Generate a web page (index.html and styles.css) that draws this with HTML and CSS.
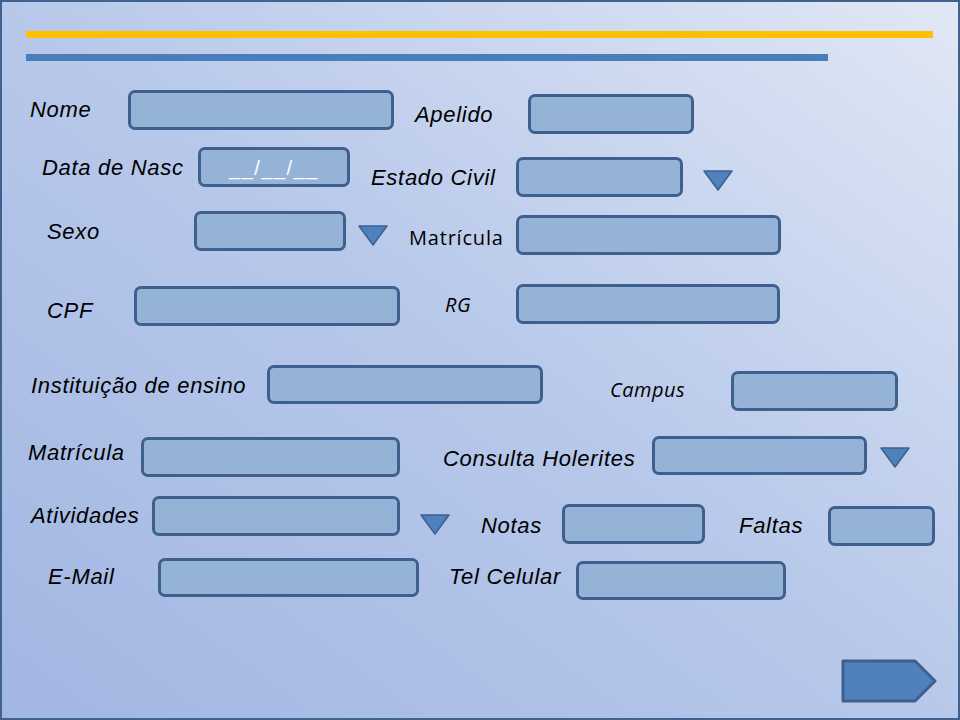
FILE: index.html
```html
<!DOCTYPE html>
<html lang="pt-BR">
<head>
    <meta charset="UTF-8">
    <meta name="viewport" content="width=device-width, initial-scale=1.0">
    <title>Cadastro de Aluno</title>
    <link rel="stylesheet" href="styles.css">
</head>
<body>

    <div class="slide">
        <!-- Title bars -->
        <div class="rule rule-yellow"></div>
        <div class="rule rule-blue"></div>

        <div class="row row-1">
            <span class="label l-nome">Nome</span>
            <div class="box b-nome"></div>
            <span class="label l-apelido">Apelido</span>
            <div class="box b-apelido"></div>
        </div>

        <div class="row row-2">
            <span class="label l-nasc">Data de Nasc</span>
            <div class="box b-nasc"><span class="date-mask">__/__/__</span></div>
            <span class="label l-civil">Estado Civil</span>
            <div class="box b-civil"></div>
            <svg class="tri t-civil" width="30" height="21" viewBox="0 0 30 21"><polygon points="1,1 29,1 15,20"/></svg>
        </div>

        <div class="row row-3">
            <span class="label l-sexo">Sexo</span>
            <div class="box b-sexo"></div>
            <svg class="tri t-sexo" width="30" height="21" viewBox="0 0 30 21"><polygon points="1,1 29,1 15,20"/></svg>
            <span class="label plain l-matricula">Matrícula</span>
            <div class="box b-matricula"></div>
        </div>

        <div class="row row-4">
            <span class="label l-cpf">CPF</span>
            <div class="box b-cpf"></div>
            <span class="label small l-rg">RG</span>
            <div class="box b-rg"></div>
        </div>

        <div class="row row-5">
            <span class="label l-inst">Instituição de ensino</span>
            <div class="box b-inst"></div>
            <span class="label small l-campus">Campus</span>
            <div class="box b-campus"></div>
        </div>

        <div class="row row-6">
            <span class="label l-mat2">Matrícula</span>
            <div class="box b-mat2"></div>
            <span class="label l-holerites">Consulta Holerites</span>
            <div class="box b-holerites"></div>
            <svg class="tri t-holerites" width="30" height="21" viewBox="0 0 30 21"><polygon points="1,1 29,1 15,20"/></svg>
        </div>

        <div class="row row-7">
            <span class="label l-ativ">Atividades</span>
            <div class="box b-ativ"></div>
            <svg class="tri t-ativ" width="30" height="21" viewBox="0 0 30 21"><polygon points="1,1 29,1 15,20"/></svg>
            <span class="label l-notas">Notas</span>
            <div class="box b-notas"></div>
            <span class="label l-faltas">Faltas</span>
            <div class="box b-faltas"></div>
        </div>

        <div class="row row-8">
            <span class="label l-email">E-Mail</span>
            <div class="box b-email"></div>
            <span class="label l-cel">Tel Celular</span>
            <div class="box b-cel"></div>
        </div>

        <!-- Next button -->
        <div class="footer">
            <svg class="next" width="96" height="44" viewBox="0 0 96 44"><polygon points="2,2 74,2 94,22 74,42 2,42"/></svg>
        </div>
    </div>

</body>
</html>
```

FILE: styles.css
```css
body {
    margin: 0;
    font-family: "Liberation Sans", Arial, sans-serif;
}

.slide {
    width: 960px;
    height: 720px;
    box-sizing: border-box;
    border: 2px solid #41628f;
    overflow: hidden;
    background: linear-gradient(to top right, #a2b6e2 0%, #b7c8ea 50%, #e1e8f5 100%);
}

.rule {
    margin-left: 24px;
    height: 7px;
}

.rule-yellow {
    margin-top: 29px;
    width: 907px;
    background-color: #ffc000;
}

.rule-blue {
    margin-top: 16px;
    width: 802px;
    background-color: #4a7ebb;
}

.row {
    display: flex;
    align-items: flex-start;
}

.row > * {
    flex: none;
}

.row-1 { margin-top: 29px; height: 44px; }
.row-2 { margin-top: 13px; height: 50px; }
.row-3 { margin-top: 14px; height: 44px; }
.row-4 { margin-top: 29px; height: 42px; }
.row-5 { margin-top: 39px; height: 46px; }
.row-6 { margin-top: 25px; height: 41px; }
.row-7 { margin-top: 19px; height: 50px; }
.row-8 { margin-top: 12px; height: 42px; }

.label {
    display: block;
    padding-top: 1px;
    font-size: 22px;
    line-height: 24px;
    font-style: italic;
    letter-spacing: 0.7px;
    color: #000;
    white-space: nowrap;
}

.label.plain {
    font-family: "Open Sans", sans-serif;
    font-size: 20px;
    font-style: normal;
    letter-spacing: 0.8px;
}

.label.small {
    font-family: "Open Sans", sans-serif;
    font-size: 20px;
    letter-spacing: 0.5px;
}

.box {
    height: 40px;
    box-sizing: border-box;
    border: 3px solid #3f5f8e;
    border-radius: 7px;
    background-color: #95b3d7;
    display: flex;
    justify-content: center;
    align-items: center;
}

.date-mask {
    color: #fff;
    font-size: 20px;
    letter-spacing: 1.5px;
    margin-top: 2px;
}

.tri polygon {
    fill: #4f81bd;
    stroke: #3f5f8e;
    stroke-width: 1.5;
    stroke-linejoin: round;
}

/* row 1 */
.l-nome { margin: 7px 0 0 28px; width: 98px; }
.b-nome { width: 266px; }
.l-apelido { margin: 12px 0 0 21px; width: 113px; }
.b-apelido { width: 166px; margin-top: 4px; }

/* row 2 */
.l-nasc { margin: 8px 0 0 40px; width: 156px; }
.b-nasc { width: 152px; }
.l-civil { margin: 18px 0 0 21px; width: 145px; }
.b-civil { width: 167px; margin-top: 10px; }
.t-civil { margin: 23px 0 0 20px; }

/* row 3 */
.l-sexo { margin: 8px 0 0 45px; width: 147px; }
.b-sexo { width: 152px; }
.t-sexo { margin: 14px 0 0 12px; }
.l-matricula { margin: 14px 0 0 21px; width: 107px; }
.b-matricula { width: 265px; margin-top: 4px; }

/* row 4 */
.l-cpf { margin: 14px 0 0 45px; width: 87px; }
.b-cpf { width: 266px; margin-top: 2px; }
.l-rg { margin: 8px 0 0 45px; width: 71px; }
.b-rg { width: 264px; }

/* row 5 */
.l-inst { margin: 8px 0 0 29px; width: 236px; }
.b-inst { width: 276px; height: 39px; }
.l-campus { margin: 12px 0 0 67px; width: 121px; }
.b-campus { width: 167px; margin-top: 6px; }

/* row 6 */
.l-mat2 { margin: 4px 0 0 26px; width: 113px; }
.b-mat2 { width: 259px; margin-top: 1px; }
.l-holerites { margin: 10px 0 0 43px; width: 209px; }
.b-holerites { width: 215px; height: 39px; }
.t-holerites { margin: 11px 0 0 13px; }

/* row 7 */
.l-ativ { margin: 7px 0 0 29px; width: 121px; }
.b-ativ { width: 248px; }
.t-ativ { margin: 18px 0 0 20px; }
.l-notas { margin: 17px 0 0 31px; width: 81px; }
.b-notas { width: 143px; margin-top: 8px; }
.l-faltas { margin: 17px 0 0 34px; width: 89px; }
.b-faltas { width: 107px; margin-top: 10px; }

/* row 8 */
.l-email { margin: 6px 0 0 46px; width: 110px; }
.b-email { width: 261px; height: 39px; }
.l-cel { margin: 6px 0 0 30px; width: 127px; }
.b-cel { width: 210px; margin-top: 3px; height: 39px; }

.footer {
    display: flex;
    justify-content: flex-end;
    margin-top: 59px;
    padding-right: 21px;
}

.next polygon {
    fill: #4f81bd;
    stroke: #3f5f8e;
    stroke-width: 3;
    stroke-linejoin: round;
}
```
